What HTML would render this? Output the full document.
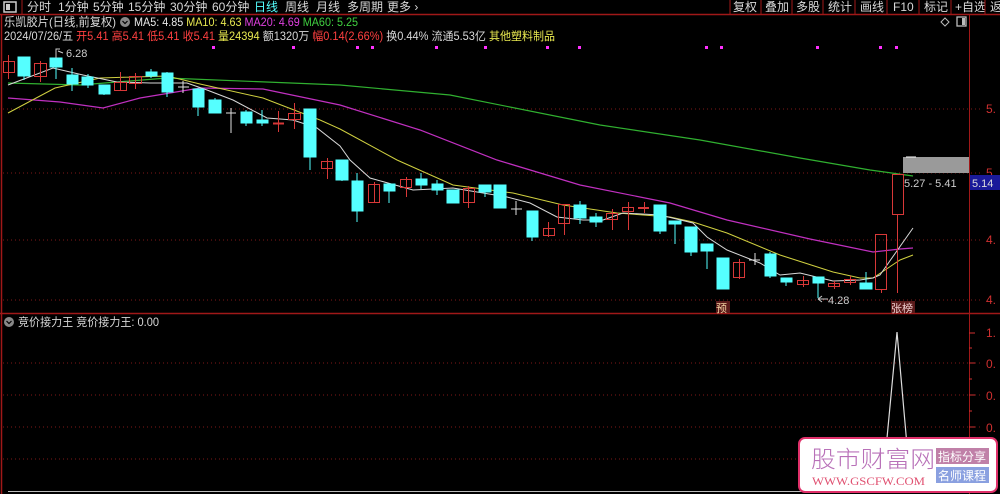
<!DOCTYPE html>
<html><head><meta charset="utf-8"><style>
*{margin:0;padding:0}
body{width:1000px;height:494px;background:#000;overflow:hidden;position:relative;font-family:"Liberation Sans","Noto Sans CJK SC",sans-serif;font-size:12px}
</style></head><body>
<svg width="1000" height="494" style="position:absolute;left:0;top:0" font-family="Liberation Sans, Noto Sans CJK SC, sans-serif">
<line x1="0" y1="14.5" x2="1000" y2="14.5" stroke="#a01818" stroke-width="1.5"/>
<rect x="4" y="2" width="12" height="10" fill="none" stroke="#ccc" stroke-width="1.5"/>
<rect x="6" y="4" width="4" height="6" fill="#ccc"/>
<line x1="22" y1="0" x2="22" y2="14" stroke="#a01818"/>
<g fill="#d8d8d8" font-size="12">
<text x="27" y="11">分时</text><text x="58" y="11">1分钟</text><text x="93" y="11">5分钟</text><text x="128" y="11">15分钟</text><text x="170" y="11">30分钟</text><text x="212" y="11">60分钟</text>
<text x="254" y="11" fill="#55ffff">日线</text><text x="285" y="11">周线</text><text x="316" y="11">月线</text><text x="347" y="11">多周期</text><text x="387" y="11">更多 ›</text>
<text x="733" y="11">复权</text><text x="765" y="11">叠加</text><text x="796" y="11">多股</text><text x="828" y="11">统计</text><text x="860" y="11">画线</text><text x="893" y="11">F10</text><text x="924" y="11">标记</text><text x="955" y="11">+自选</text><text x="990" y="11">返</text>
</g>
<g stroke="#a01818"><line x1="730" y1="0" x2="730" y2="14"/><line x1="761" y1="0" x2="761" y2="14"/><line x1="792" y1="0" x2="792" y2="14"/><line x1="823" y1="0" x2="823" y2="14"/><line x1="855" y1="0" x2="855" y2="14"/><line x1="887" y1="0" x2="887" y2="14"/><line x1="919" y1="0" x2="919" y2="14"/><line x1="951" y1="0" x2="951" y2="14"/><line x1="985" y1="0" x2="985" y2="14"/></g>
<line x1="1.5" y1="15" x2="1.5" y2="494" stroke="#a01818" stroke-width="1.5"/>
<line x1="969.5" y1="15" x2="969.5" y2="494" stroke="#a01818"/>
<line x1="0" y1="313.5" x2="1000" y2="313.5" stroke="#a01818" stroke-width="1.5"/>
<text x="4" y="26" fill="#d8d8d8" font-size="12" textLength="112" lengthAdjust="spacingAndGlyphs">乐凯胶片(日线,前复权)</text>
<circle cx="125" cy="22" r="5" fill="#888"/><path d="M122.5 21 L125 23.5 L127.5 21" stroke="#000" fill="none" stroke-width="1.2"/>
<text x="134" y="26" font-size="11.5" textLength="224" lengthAdjust="spacingAndGlyphs"><tspan fill="#e8e8e8">MA5: 4.85 </tspan><tspan fill="#e8e850">MA10: 4.63 </tspan><tspan fill="#e040e0">MA20: 4.69 </tspan><tspan fill="#40d040">MA60: 5.25</tspan></text>
<text x="4" y="40" font-size="11.5" textLength="551" lengthAdjust="spacingAndGlyphs"><tspan fill="#d8d8d8">2024/07/26/五 </tspan><tspan fill="#ff4040">开5.41 高5.41 低5.41 收5.41 </tspan><tspan fill="#e8e850">量24394 </tspan><tspan fill="#d8d8d8">额1320万 </tspan><tspan fill="#ff4040">幅0.14(2.66%) </tspan><tspan fill="#d8d8d8">换0.44% 流通5.53亿 </tspan><tspan fill="#e8e850">其他塑料制品</tspan></text>
<path d="M941 22 L945 18 L949 22 L945 26Z" fill="none" stroke="#bbb"/>
<rect x="957" y="17" width="9" height="9" fill="none" stroke="#bbb" stroke-width="1.3"/><rect x="962" y="18" width="3" height="7" fill="#bbb"/>
<g fill="#ff30ff"><rect x="212" y="46" width="3" height="3"/><rect x="292" y="46" width="3" height="3"/><rect x="356" y="46" width="3" height="3"/><rect x="371" y="46" width="3" height="3"/><rect x="435" y="46" width="3" height="3"/><rect x="484" y="46" width="3" height="3"/><rect x="546" y="46" width="3" height="3"/><rect x="578" y="46" width="3" height="3"/><rect x="705" y="46" width="3" height="3"/><rect x="720" y="46" width="3" height="3"/><rect x="816" y="46" width="3" height="3"/><rect x="879" y="46" width="3" height="3"/><rect x="895" y="46" width="3" height="3"/></g>
<g stroke="#801818" stroke-dasharray="1,3"><line x1="3" y1="109" x2="980" y2="109"/><line x1="3" y1="173" x2="980" y2="173"/><line x1="3" y1="240" x2="980" y2="240"/><line x1="3" y1="300" x2="980" y2="300"/>
<line x1="3" y1="363" x2="980" y2="363"/><line x1="3" y1="395" x2="980" y2="395"/><line x1="3" y1="427" x2="980" y2="427"/><line x1="3" y1="459" x2="980" y2="459"/></g>
<g fill="#d03030" font-size="12"><text x="986" y="113">5.</text><text x="986" y="177">5.</text><text x="986" y="244">4.</text><text x="986" y="304">4.</text>
<text x="986" y="337">1.</text><text x="986" y="368">0.</text><text x="986" y="400">0.</text><text x="986" y="432">0.</text></g>
<g stroke="#d03030"><line x1="969" y1="333" x2="975" y2="333"/><line x1="969" y1="348" x2="972" y2="348"/><line x1="969" y1="363" x2="975" y2="363"/><line x1="969" y1="379" x2="972" y2="379"/><line x1="969" y1="395" x2="975" y2="395"/><line x1="969" y1="411" x2="972" y2="411"/><line x1="969" y1="427" x2="975" y2="427"/></g>
<polyline fill="none" stroke="#30b030" stroke-width="1.2" points="8,83 80,85 167,78 340,85 450,95 600,125 700,140 800,158 870,170 913,176"/>
<polyline fill="none" stroke="#c030c0" stroke-width="1.2" points="8,98 60,102 103,108 140,98 200,88 263,89 340,105 420,130 497,160 580,185 670,203 727,220 810,239 873,252 900,249 913,248"/>
<polyline fill="none" stroke="#d0d040" stroke-width="1" points="8,113 55,88 100,78 167,76 200,84 263,98 320,120 340,129 397,160 453,185 513,193 563,205 617,213 670,217 693,222 727,233 780,255 833,272 860,278 873,278 900,260 913,255"/>
<polyline fill="none" stroke="#d8d8d8" stroke-width="1" points="8,85 53,68 83,75 117,82 150,83 187,83 207,90 233,100 267,118 293,120 317,128 340,146 350,160 370,178 413,190 453,188 507,197 530,203 557,217 583,220 603,220 623,213 660,215 693,223 707,237 727,250 760,263 780,275 800,273 833,281 860,280 873,278 880,275 913,228"/>
<g fill="#55ffff" stroke="#55ffff">
<line x1="24" y1="57" x2="24" y2="80"/><rect x="18" y="57" width="12" height="19"/>
<line x1="56" y1="50" x2="56" y2="79"/><rect x="50" y="58" width="12" height="9"/>
<line x1="72" y1="68" x2="72" y2="91"/><rect x="67" y="75" width="11" height="9"/>
<line x1="88" y1="74" x2="88" y2="88"/><rect x="82" y="77" width="11" height="8"/>
<line x1="104" y1="85" x2="104" y2="95"/><rect x="99" y="85" width="11" height="9"/>
<line x1="151" y1="69" x2="151" y2="78"/><rect x="146" y="72" width="11" height="4"/>
<line x1="167" y1="72" x2="167" y2="97"/><rect x="162" y="73" width="11" height="19"/>
<line x1="198" y1="88" x2="198" y2="116"/><rect x="193" y="89" width="11" height="18"/>
<line x1="215" y1="98" x2="215" y2="113"/><rect x="209" y="100" width="12" height="13"/>
<line x1="246" y1="110" x2="246" y2="126"/><rect x="241" y="112" width="11" height="11"/>
<line x1="262" y1="110" x2="262" y2="126"/><rect x="257" y="120" width="11" height="3"/>
<line x1="310" y1="109" x2="310" y2="170"/><rect x="304" y="109" width="12" height="48"/>
<line x1="342" y1="160" x2="342" y2="181"/><rect x="336" y="160" width="12" height="20"/>
<line x1="357" y1="173" x2="357" y2="222"/><rect x="352" y="181" width="11" height="30"/>
<line x1="389" y1="184" x2="389" y2="203"/><rect x="384" y="184" width="11" height="7"/>
<line x1="421" y1="173" x2="421" y2="189"/><rect x="416" y="179" width="11" height="6"/>
<line x1="437" y1="180" x2="437" y2="195"/><rect x="432" y="184" width="11" height="6"/>
<line x1="453" y1="190" x2="453" y2="203"/><rect x="447" y="190" width="12" height="13"/>
<line x1="485" y1="185" x2="485" y2="197"/><rect x="479" y="185" width="12" height="7"/>
<line x1="500" y1="185" x2="500" y2="208"/><rect x="494" y="185" width="12" height="23"/>
<line x1="532" y1="211" x2="532" y2="241"/><rect x="527" y="211" width="11" height="26"/>
<line x1="580" y1="201" x2="580" y2="224"/><rect x="574" y="205" width="12" height="13"/>
<line x1="596" y1="213" x2="596" y2="227"/><rect x="590" y="217" width="12" height="5"/>
<line x1="660" y1="205" x2="660" y2="234"/><rect x="654" y="205" width="12" height="26"/>
<line x1="675" y1="221" x2="675" y2="244"/><rect x="669" y="221" width="12" height="3"/>
<line x1="691" y1="227" x2="691" y2="256"/><rect x="685" y="227" width="12" height="25"/>
<line x1="707" y1="244" x2="707" y2="269"/><rect x="701" y="244" width="12" height="7"/>
<line x1="723" y1="258" x2="723" y2="289"/><rect x="717" y="258" width="12" height="31"/>
<line x1="770" y1="252" x2="770" y2="278"/><rect x="765" y="254" width="11" height="22"/>
<line x1="786" y1="278" x2="786" y2="286"/><rect x="781" y="278" width="11" height="4"/>
<line x1="818" y1="277" x2="818" y2="298"/><rect x="813" y="277" width="11" height="6"/>
<line x1="866" y1="272" x2="866" y2="289"/><rect x="860" y="283" width="12" height="6"/>
</g>
<g fill="none" stroke="#d83838">
<line x1="8.5" y1="55" x2="8.5" y2="79"/><rect x="3.5" y="61.5" width="11" height="11"/>
<line x1="40.5" y1="61" x2="40.5" y2="82"/><rect x="34.5" y="63.5" width="12" height="13"/>
<line x1="120.5" y1="72" x2="120.5" y2="90"/><rect x="114.5" y="82.5" width="12" height="8"/>
<line x1="135.5" y1="73" x2="135.5" y2="89"/><rect x="129.5" y="76.5" width="12" height="7"/>
<line x1="278.5" y1="111" x2="278.5" y2="132"/><line x1="273" y1="123.5" x2="284" y2="123.5" stroke-width="2"/>
<line x1="294.5" y1="103" x2="294.5" y2="129"/><rect x="288.5" y="113.5" width="12" height="6"/>
<line x1="327.5" y1="158" x2="327.5" y2="179"/><rect x="321.5" y="161.5" width="11" height="7"/>
<line x1="374.5" y1="182" x2="374.5" y2="203"/><rect x="368.5" y="184.5" width="11" height="18"/>
<line x1="406.5" y1="177" x2="406.5" y2="197"/><rect x="400.5" y="179.5" width="11" height="8"/>
<line x1="468.5" y1="186" x2="468.5" y2="208"/><rect x="463.5" y="188.5" width="11" height="14"/>
<line x1="548.5" y1="222" x2="548.5" y2="237"/><rect x="543.5" y="228.5" width="11" height="7"/>
<line x1="564.5" y1="204" x2="564.5" y2="235"/><rect x="558.5" y="204.5" width="11" height="19"/>
<line x1="612.5" y1="209" x2="612.5" y2="230"/><rect x="606.5" y="213.5" width="11" height="6"/>
<line x1="628.5" y1="202" x2="628.5" y2="230"/><rect x="622.5" y="207.5" width="11" height="4"/>
<line x1="644.5" y1="202" x2="644.5" y2="213"/><line x1="638" y1="208" x2="649" y2="208" stroke-width="2"/>
<line x1="739.5" y1="259" x2="739.5" y2="279"/><rect x="733.5" y="262.5" width="11" height="15"/>
<line x1="803.5" y1="276" x2="803.5" y2="287"/><rect x="797.5" y="280.5" width="11" height="4"/>
<line x1="834.5" y1="281" x2="834.5" y2="289"/><rect x="828.5" y="283.5" width="11" height="3"/>
<line x1="850.5" y1="276" x2="850.5" y2="285"/><rect x="844.5" y="279.5" width="11" height="3"/>
<line x1="881.5" y1="289" x2="881.5" y2="293"/><rect x="875.5" y="234.5" width="11" height="55"/>
<line x1="897.5" y1="214" x2="897.5" y2="293"/><rect x="892.5" y="174.5" width="11" height="40"/>
</g>
<g stroke="#e0e0e0"><line x1="183" y1="81" x2="183" y2="93"/><line x1="178" y1="87" x2="189" y2="87"/>
<line x1="231" y1="108" x2="231" y2="133"/><line x1="226" y1="113" x2="236" y2="113"/>
<line x1="516" y1="201" x2="516" y2="215"/><line x1="511" y1="209" x2="522" y2="209"/>
<line x1="755" y1="253" x2="755" y2="265"/><line x1="749" y1="260" x2="760" y2="260"/></g>
<g stroke="#ccc" fill="none"><path d="M56 58 V49 H60"/><path d="M63 53 L58 51"/></g>
<text x="66" y="57" fill="#ccc" font-size="11">6.28</text>
<path d="M818 299 L822 296 M818 299 L822 302 M818 299 H828" stroke="#ccc" fill="none"/>
<text x="828" y="304" fill="#ccc" font-size="11">4.28</text>
<rect x="903" y="157" width="66" height="16" fill="#9a9a9a"/><line x1="906" y1="157" x2="916" y2="157" stroke="#fff"/>
<text x="904" y="187" fill="#ccc" font-size="11">5.27 - 5.41</text>
<rect x="970" y="175" width="30" height="15" fill="#1a1a9a"/><text x="972" y="187" fill="#ddd" font-size="11">5.14</text>
<rect x="716" y="301" width="14" height="12" fill="#5a1a1a"/><text x="716" y="312" fill="#f0d0a0" font-size="11">预</text>
<rect x="891" y="301" width="24" height="12" fill="#5a1a1a"/><text x="891" y="312" fill="#f0d0d0" font-size="11">张榜</text>
<circle cx="9" cy="322" r="5" fill="#888"/><path d="M6.5 321 L9 323.5 L11.5 321" stroke="#000" fill="none" stroke-width="1.2"/>
<text x="18" y="326" fill="#d8d8d8" font-size="11.5" textLength="141" lengthAdjust="spacingAndGlyphs">竞价接力王 竞价接力王: 0.00</text>
<line x1="8" y1="491.5" x2="900" y2="491.5" stroke="#bbb"/>
<polyline points="882,491 897,332 911,491" fill="none" stroke="#ddd" stroke-width="1.2"/>
<rect x="799" y="438" width="198" height="54" rx="6" fill="#fff" stroke="#e0306a" stroke-width="2"/>
<text x="811" y="467" font-size="23" fill="#b870b8" font-family="Noto Sans CJK SC, sans-serif" font-weight="300" textLength="124" lengthAdjust="spacingAndGlyphs">股市财富网</text>
<text x="812" y="485" font-size="12" fill="#e05070" font-family="Liberation Serif, serif" textLength="113" lengthAdjust="spacingAndGlyphs">WWW.GSCFW.COM</text>
<rect x="936" y="448" width="53" height="16" fill="#c080a8"/><text x="938" y="461" font-size="12" fill="#fff">指标分享</text>
<rect x="936" y="467" width="53" height="16" fill="#8aa0e0"/><text x="938" y="480" font-size="12" fill="#fff">名师课程</text>
</svg>
</body></html>
